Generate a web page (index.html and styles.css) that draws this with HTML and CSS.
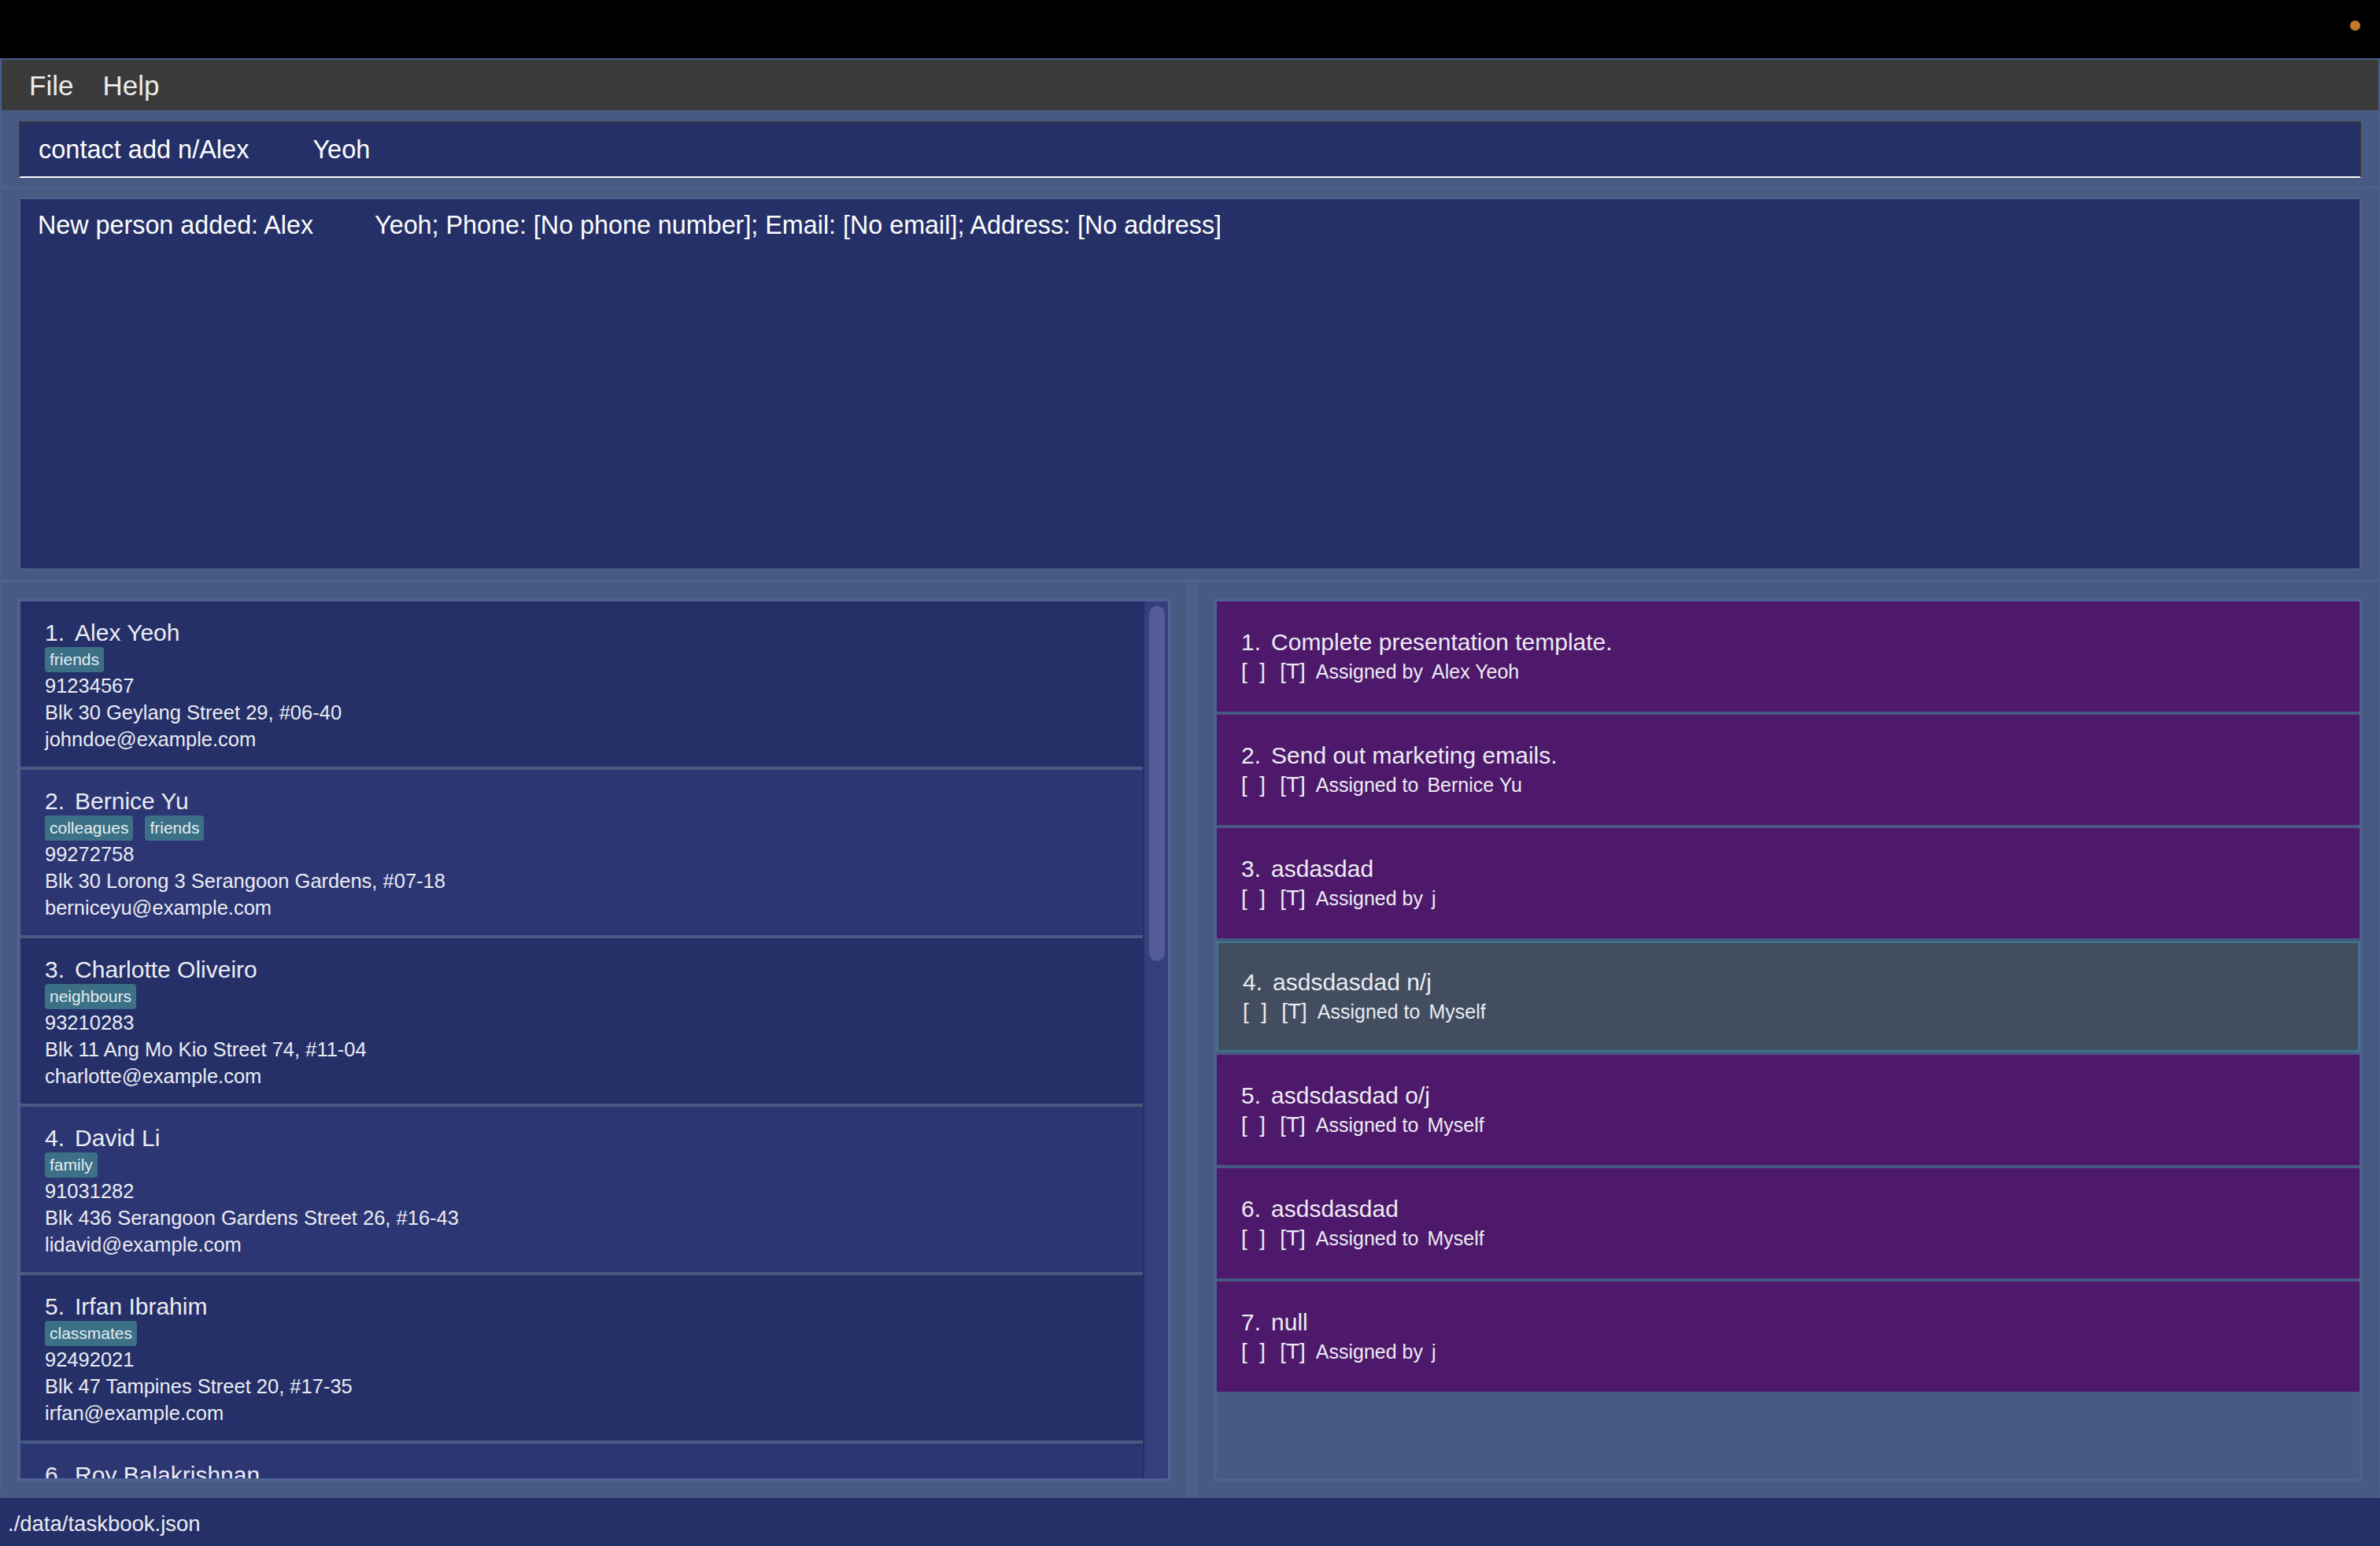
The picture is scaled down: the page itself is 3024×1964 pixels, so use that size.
FILE: index.html
```html
<!DOCTYPE html>
<html>
<head>
<meta charset="utf-8">
<link rel="stylesheet" href="styles.css">
</head>
<body>
<div class="titlebar"><span class="dot"></span></div>
<div class="app">
  <div class="menubar"><span class="menu-item">File</span><span class="menu-item">Help</span></div>
  <div class="command-section">
    <div class="command-box">contact add n/Alex<span class="wide-gap"></span>Yeoh</div>
  </div>
  <div class="band"></div>
  <div class="result-section">
    <div class="result-box">New person added: Alex<span class="wide-gap2"></span>Yeoh; Phone: [No phone number]; Email: [No email]; Address: [No address]</div>
  </div>
  <div class="band"></div>
  <div class="panels">
    <div class="pane left-pane">
      <div class="list-box person-list">
        <div class="cards">
          <div class="person-card">
            <div class="name"><span class="idx">1.</span>Alex Yeoh</div>
            <div class="tags"><span class="tag">friends</span></div>
            <div class="detail">91234567</div>
            <div class="detail">Blk 30 Geylang Street 29, #06-40</div>
            <div class="detail">johndoe@example.com</div>
          </div>
          <div class="person-card alt">
            <div class="name"><span class="idx">2.</span>Bernice Yu</div>
            <div class="tags"><span class="tag">colleagues</span><span class="tag">friends</span></div>
            <div class="detail">99272758</div>
            <div class="detail">Blk 30 Lorong 3 Serangoon Gardens, #07-18</div>
            <div class="detail">berniceyu@example.com</div>
          </div>
          <div class="person-card">
            <div class="name"><span class="idx">3.</span>Charlotte Oliveiro</div>
            <div class="tags"><span class="tag">neighbours</span></div>
            <div class="detail">93210283</div>
            <div class="detail">Blk 11 Ang Mo Kio Street 74, #11-04</div>
            <div class="detail">charlotte@example.com</div>
          </div>
          <div class="person-card alt">
            <div class="name"><span class="idx">4.</span>David Li</div>
            <div class="tags"><span class="tag">family</span></div>
            <div class="detail">91031282</div>
            <div class="detail">Blk 436 Serangoon Gardens Street 26, #16-43</div>
            <div class="detail">lidavid@example.com</div>
          </div>
          <div class="person-card">
            <div class="name"><span class="idx">5.</span>Irfan Ibrahim</div>
            <div class="tags"><span class="tag">classmates</span></div>
            <div class="detail">92492021</div>
            <div class="detail">Blk 47 Tampines Street 20, #17-35</div>
            <div class="detail">irfan@example.com</div>
          </div>
          <div class="person-card alt">
            <div class="name"><span class="idx">6.</span>Roy Balakrishnan</div>
          </div>
        </div>
        <div class="scrollbar"><div class="thumb"></div></div>
      </div>
    </div>
    <div class="divider"></div>
    <div class="pane right-pane">
      <div class="list-box task-list">
        <div class="task-card">
          <div class="title"><span class="idx">1.</span>Complete presentation template.</div>
          <div class="meta"><span class="br">[  ]</span><span class="br">[T]</span><span class="assign">Assigned by</span><span class="who">Alex Yeoh</span></div>
        </div>
        <div class="task-card">
          <div class="title"><span class="idx">2.</span>Send out marketing emails.</div>
          <div class="meta"><span class="br">[  ]</span><span class="br">[T]</span><span class="assign">Assigned to</span><span class="who">Bernice Yu</span></div>
        </div>
        <div class="task-card">
          <div class="title"><span class="idx">3.</span>asdasdad</div>
          <div class="meta"><span class="br">[  ]</span><span class="br">[T]</span><span class="assign">Assigned by</span><span class="who">j</span></div>
        </div>
        <div class="task-card selected">
          <div class="title"><span class="idx">4.</span>asdsdasdad n/j</div>
          <div class="meta"><span class="br">[  ]</span><span class="br">[T]</span><span class="assign">Assigned to</span><span class="who">Myself</span></div>
        </div>
        <div class="task-card">
          <div class="title"><span class="idx">5.</span>asdsdasdad o/j</div>
          <div class="meta"><span class="br">[  ]</span><span class="br">[T]</span><span class="assign">Assigned to</span><span class="who">Myself</span></div>
        </div>
        <div class="task-card">
          <div class="title"><span class="idx">6.</span>asdsdasdad</div>
          <div class="meta"><span class="br">[  ]</span><span class="br">[T]</span><span class="assign">Assigned to</span><span class="who">Myself</span></div>
        </div>
        <div class="task-card">
          <div class="title"><span class="idx">7.</span>null</div>
          <div class="meta"><span class="br">[  ]</span><span class="br">[T]</span><span class="assign">Assigned by</span><span class="who">j</span></div>
        </div>
      </div>
    </div>
  </div>
  <div class="statusbar">./data/taskbook.json</div>
</div>
</body>
</html>
```
FILE: styles.css
```css
* { box-sizing: border-box; }
html, body { margin: 0; padding: 0; }
body {
  background: #000;
  font-family: "Liberation Sans", Arial, sans-serif;
  color: #fff;
  width: 3024px;
  height: 1964px;
  overflow: hidden;
}
.titlebar {
  height: 74px;
  background: #000;
  display: flex;
  justify-content: flex-end;
  align-items: flex-start;
  padding: 26px 25px 0 0;
}
.dot {
  width: 13px;
  height: 13px;
  border-radius: 50%;
  background: #c47a2c;
}
.app {
  height: 1890px;
  display: flex;
  flex-direction: column;
  background: #465a82;
  overflow: hidden;
}
.menubar {
  height: 66px;
  flex: 0 0 66px;
  border: 2px solid #4a5e89;
  border-bottom: none;
  background: #3a3a3a;
  display: flex;
  align-items: center;
  padding: 2px 0 0 35px;
  font-size: 35px;
  color: #ececec;
}
.menu-item { margin-right: 37px; }
.command-section {
  flex: 0 0 96px;
  padding: 14px 22px 10px 22px;
  border-left: 2px solid #4a5e89;
  border-right: 2px solid #4a5e89;
}
.command-box {
  height: 72px;
  background: #253069;
  border: 2px solid #383838;
  border-bottom: 2px solid #ffffff;
  font-size: 32.5px;
  line-height: 68px;
  padding-left: 23px;
  white-space: nowrap;
}
.wide-gap { display: inline-block; width: 81px; }
.wide-gap2 { display: inline-block; width: 78px; }
.band {
  flex: 0 0 4px;
  background: #4c618c;
}
.result-section {
  flex: 0 0 496px;
  padding: 11px 22px 12px 22px;
  border-left: 2px solid #4a5e89;
  border-right: 2px solid #4a5e89;
}
.result-box {
  height: 473px;
  background: #253069;
  border: 2px solid #4d6190;
  font-size: 32.3px;
  line-height: 40px;
  padding: 13px 0 0 22px;
  white-space: nowrap;
}
.panels {
  flex: 0 0 1163px;
  min-height: 0;
  display: flex;
  border-left: 2px solid #4a5e89;
  border-right: 2px solid #4a5e89;
  overflow: hidden;
}
.pane {
  padding: 20px 20px 21px 20px;
  display: flex;
  min-height: 0;
}
.left-pane { flex: 0 0 1504px; }
.right-pane { flex: 1; padding-left: 21px; }
.divider {
  flex: 0 0 13px;
  background: #4a5e88;
  border-left: 1px solid #52668f;
  border-right: 1px solid #52668f;
}
.list-box {
  flex: 1;
  min-height: 0;
  border: 4px solid #4d6291;
  overflow: hidden;
}
.person-list {
  display: flex;
  background: #253069;
}
.cards {
  flex: 0 0 1426px;
  min-height: 0;
  display: flex;
  flex-direction: column;
  gap: 4px;
  background: #465a82;
  overflow: hidden;
}
.person-card {
  flex: 0 0 210px;
  background: #253069;
  padding: 22px 0 0 31px;
  color: #ebebf3;
}
.person-card.alt { background: #2c3673; }
.name {
  font-size: 30px;
  line-height: 36px;
  white-space: nowrap;
}
.idx { margin-right: 13px; }
.tags {
  display: flex;
  gap: 15px;
  height: 32px;
}
.tag {
  height: 32px;
  line-height: 32px;
  padding: 0 6px;
  font-size: 21px;
  background: #3b7086;
  border-radius: 4px;
  color: #e4ecf0;
}
.detail {
  font-size: 25.5px;
  line-height: 34px;
  white-space: nowrap;
}
.scrollbar {
  flex: 0 0 30px;
  margin-left: 2px;
  background: #343f7c;
  padding: 6px 2px 0 6px;
}
.thumb {
  width: 20px;
  height: 451px;
  background: #535c97;
  border-radius: 10px;
}
.task-list {
  background: #465a82;
  display: flex;
  flex-direction: column;
  gap: 4px;
}
.task-card {
  flex: 0 0 140px;
  background: #4f196b;
  padding: 34px 0 0 31px;
  color: #ebebf3;
}
.task-card.selected {
  background: #424e5f;
  border: 2px solid #3a7a8e;
  padding: 32px 0 0 31px;
}
.title {
  font-size: 30px;
  line-height: 36px;
  white-space: nowrap;
}
.meta {
  display: flex;
  align-items: baseline;
  height: 36px;
  margin-top: 3px;
  white-space: pre;
}
.br {
  font-size: 28px;
  margin-right: 18px;
}
.br + .br { margin-right: 13px; }
.assign, .who { font-size: 25px; }
.assign { margin-right: 11px; }
.statusbar {
  flex: 0 0 61px;
  background: #253069;
  font-size: 27.5px;
  line-height: 61px;
  padding: 2px 0 0 10px;
  color: #ebebf3;
}
```
